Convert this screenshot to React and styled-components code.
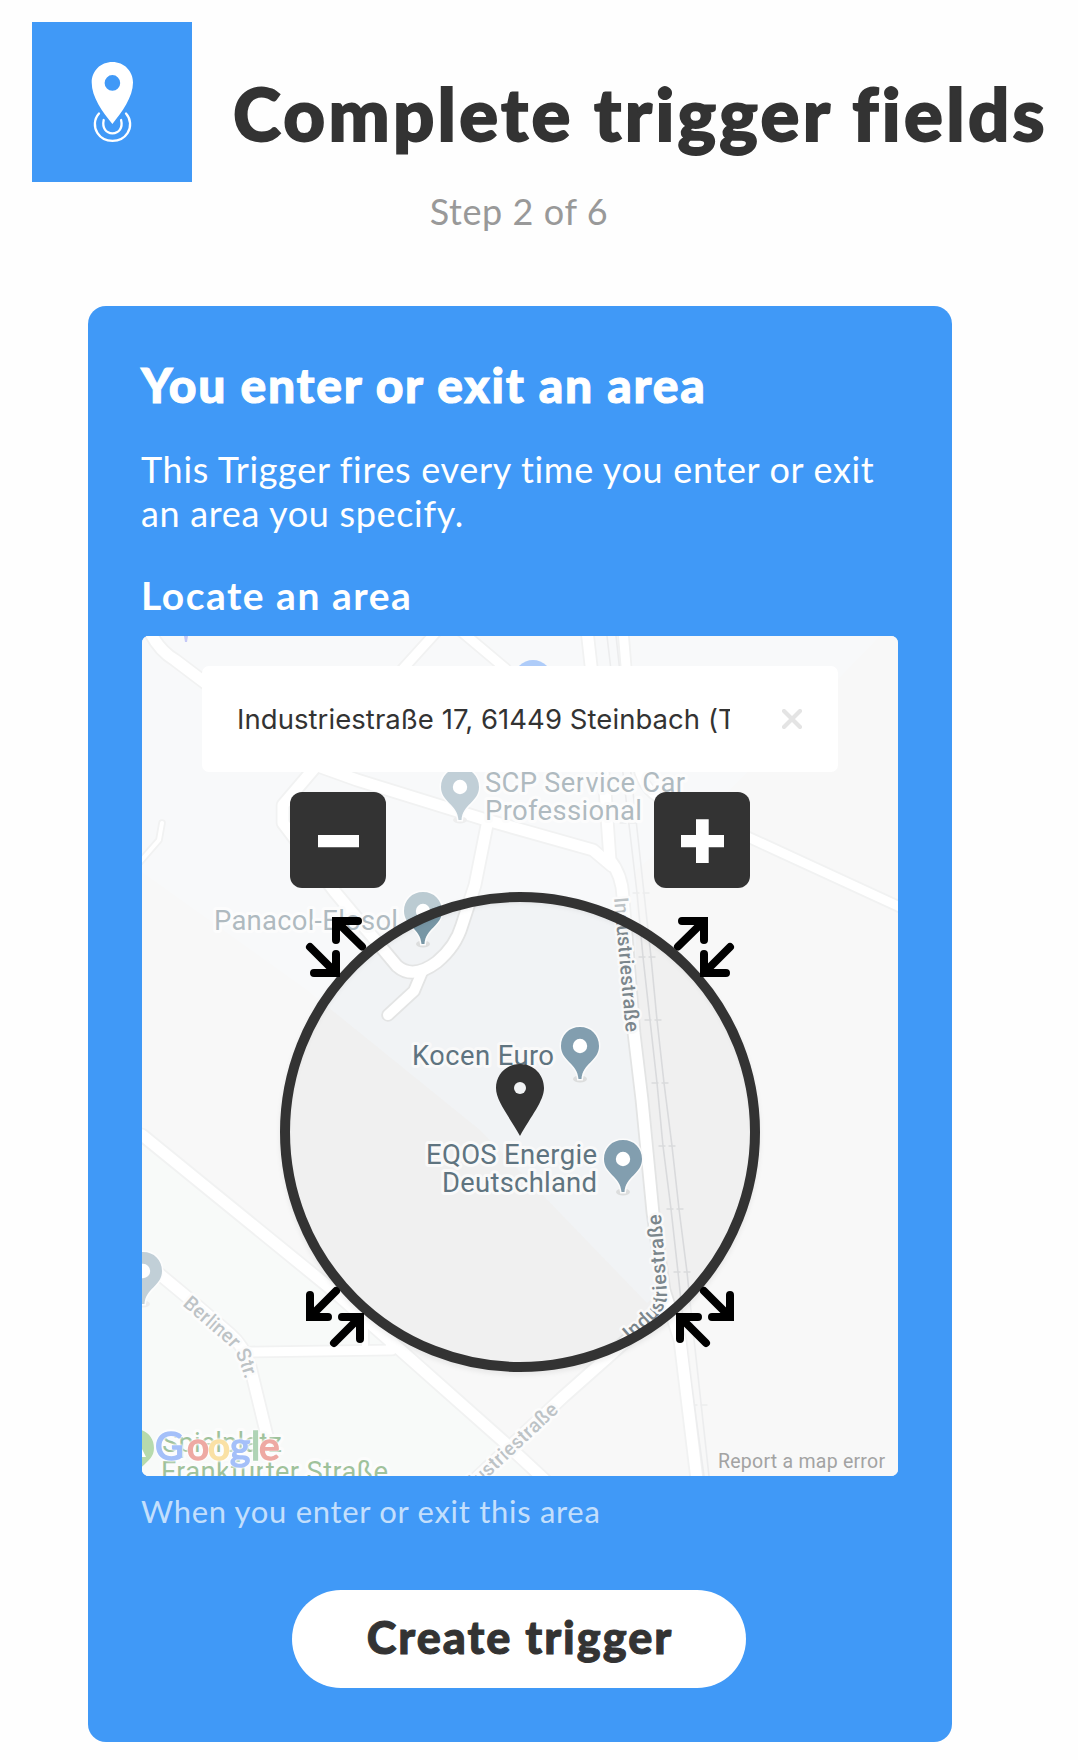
import React from "react";
import styled, { createGlobalStyle } from "styled-components";

const BLUE = "#4099f7";
const INK = "#333333";

const GlobalStyle = createGlobalStyle`
  * { box-sizing: border-box; }
  body { margin: 0; background: #fefefe; }
`;

const Page = styled.main`
  width: 1078px;
  height: 1760px;
  overflow: hidden;
  font-family: Lato, "Open Sans", sans-serif;
  color: ${INK};
`;

const Header = styled.header`
  display: flex;
  padding: 22px 0 0 32px;
`;

const ServiceTile = styled.div`
  flex: none;
  width: 160px;
  height: 160px;
  background: ${BLUE};
`;

const Title = styled.h1`
  margin: 46px 0 0 41px;
  font-size: 72.5px;
  line-height: 90px;
  font-weight: 900;
  letter-spacing: 3.3px;
  -webkit-text-stroke: 1.8px ${INK};
  white-space: nowrap;
`;

const Step = styled.p`
  margin: 7px 0 0;
  width: 1038px;
  text-align: center;
  font-size: 36px;
  line-height: 44px;
  letter-spacing: 0.6px;
  color: #999999;
`;

const Card = styled.section`
  width: 864px;
  height: 1436px;
  margin: 73px 0 0 88px;
  padding: 50px 54px 0 53px;
  border-radius: 18px;
  background: ${BLUE};
  color: #ffffff;
`;

const CardTitle = styled.h2`
  margin: 0;
  font-size: 48px;
  line-height: 58px;
  font-weight: 900;
  letter-spacing: 1.75px;
  -webkit-text-stroke: 1px #ffffff;
  white-space: nowrap;
`;

const Description = styled.p`
  margin: 33px 0 0;
  font-size: 36px;
  line-height: 44px;
  letter-spacing: 0.67px;
  white-space: nowrap;
`;

const FieldLabel = styled.h3`
  margin: 36px 0 0;
  font-size: 39px;
  line-height: 48px;
  font-weight: 700;
  letter-spacing: 1.5px;
`;

const Hint = styled.p`
  margin: 15px 0 0;
  font-size: 31px;
  line-height: 40px;
  letter-spacing: 0.7px;
  color: rgba(255, 255, 255, 0.7);
`;

const CreateButton = styled.button`
  display: block;
  width: 454px;
  height: 98px;
  margin: 59px 0 0 151px;
  padding: 0 0 5px 2px;
  border: 0;
  border-radius: 49px;
  background: #ffffff;
  color: ${INK};
  font: 900 45px/54px Lato, sans-serif;
  letter-spacing: 2px;
  -webkit-text-stroke: 1px ${INK};
`;

const MapFrame = styled.div`
  position: relative;
  width: 756px;
  height: 840px;
  margin: 17px 0 0 1px;
  border-radius: 7px;
  overflow: hidden;
  background: #f8f8f8;
`;

const MapDrawing = styled.svg`
  display: block;
`;

const MapControls = styled.div`
  position: absolute;
  inset: 30px 60px auto;
`;

const SearchBox = styled.div`
  display: flex;
  align-items: center;
  justify-content: space-between;
  height: 106px;
  padding: 0 36px 0 35px;
  border-radius: 7px;
  background: #ffffff;
`;

const SearchText = styled.span`
  width: 493px;
  overflow: hidden;
  white-space: nowrap;
  font: 400 27.5px/40px Inter, sans-serif;
  letter-spacing: 0.06px;
  color: ${INK};
`;

const ZoomRow = styled.div`
  display: flex;
  justify-content: space-between;
  padding: 20px 88px 0;
`;

const ZoomButton = styled.button`
  display: grid;
  width: 96px;
  height: 96px;
  padding: 0;
  border: 0;
  border-radius: 12px;
  background: ${INK};
`;

const RoadName = styled.text`
  font: 500 20px Roboto, sans-serif;
  fill: #7b868c;
  stroke: #f9f9f9;
  stroke-width: 5px;
  stroke-linejoin: round;
  paint-order: stroke;
`;

const PlaceName = styled.text`
  font: 400 27.5px Roboto, sans-serif;
  fill: ${(p) => (p.$park ? "#3f8436" : "#5f7480")};
  stroke: #f9f9f9;
  stroke-width: 6px;
  stroke-linejoin: round;
  paint-order: stroke;
`;

const Attribution = styled.text`
  font: 400 19.5px Roboto, sans-serif;
  fill: #a3a3a3;
`;

const LogoText = styled.text`
  font: 400 39px Lato, sans-serif;
  stroke-width: 1.6px;
  filter: drop-shadow(0 0 1.2px #fff) drop-shadow(0 0 1.2px #fff);
`;

function ServiceIcon() {
  return (
    <svg width="160" height="160" viewBox="32 22 160 160" fill="none">
      <g stroke="#fff" strokeWidth="2.3" strokeLinecap="round">
        <path d="M99 113.5C94 119 93.600 127 97.500 133.200C104 143.400 121 143.400 127.500 133.200C131.400 127 131 119 126 113.500" />
        <path d="M103.700 120C102 128 106 133.300 112.400 133.300C119 133.300 123 128 121.100 120" />
      </g>
      <path
        fill="#fff"
        fillRule="evenodd"
        d="M112.400 62C124 62 133 71 133 82.500C133 97 122 112 112.400 124C102.500 112 91.700 97 91.700 82.500C91.700 71 100.500 62 112.400 62ZM112.400 75.100a7.800 7.800 0 1 0 0 15.600a7.800 7.800 0 1 0 0 -15.600Z"
      />
    </svg>
  );
}

const ROADS = [
  { w: 11, d: "M142 1135L330 1288L397 1347L503 1441L545 1480" },
  { w: 11, d: "M140 1258L187 1297L230 1334Q244 1346 250 1366L268 1440" },
  { w: 9, d: "M250 1352L392 1350" },
  { w: 6, d: "M365 1324V1350M389 1338V1350" },
  { w: 11, d: "M660 1310L607 1358L563 1397L470 1484" },
  { w: 11, d: "M587 630L605 790L610 860Q622 875 623 897L634 1033L642 1100L653 1213L664 1290L680 1340L697 1480" },
  { w: 9, d: "M623 630L628 690L638 765Q644 795 670 802L750 838L900 907" },
  { w: 11, d: "M318 764L283 805L283 823L335 892L397 966Q413 980 437 962Q456 946 462 925L475 885L487 825" },
  { w: 10, d: "M422 972L414 991L388 1015" },
  { w: 11, d: "M318 766L357 780L483 819L593 850L612 866" },
  { w: 11, d: "M148 628Q158 650 175 660L212 688" },
  { w: 9, d: "M438 630L400 672" },
  { w: 9, d: "M462 632L506 669" },
  { w: 4, d: "M162 823L159 840L140 862" },
];

const RAILS = [
  "M607 636L637 893L643 957L650 1020L657 1083L663 1146L671 1209L678 1272L684 1330L704 1476",
  "M616 636L644 893L651 957L657 1020L664 1083L672 1146L679 1209L687 1272L693 1330L709 1476",
];

const RAIL_TICKS = [
  [628, 823], [641, 893], [647, 957], [653, 1020], [660, 1083],
  [667, 1146], [675, 1209], [682, 1272], [699, 1405],
];

function PlacePin({ x, y, color = "#829eaf" }) {
  return (
    <g transform={`translate(${x} ${y})`}>
      <ellipse cy="33" rx="7" ry="3.500" fill="#dcdddd" />
      <path
        d="M0 -19C11 -19 19 -11 19 0C19 15 2.500 17 1.500 33H-1.500C-2.500 17 -19 15 -19 0C-19 -11 -11 -19 0 -19Z"
        fill={color}
        stroke="#fbfbfb"
        strokeWidth="3"
        paintOrder="stroke"
      />
      <circle r="7.200" fill="#fff" />
    </g>
  );
}

function ResizeArrows() {
  const top =
    "M358 921H336V940M337 922L362 946.500M314 973H336V954M335 972L310 947";
  const bottom =
    "M310 1295V1317H328M311 1316L336 1291M342 1317H360V1339M359 1318L334 1343";
  return (
    <g fill="none" stroke="#000" strokeWidth="8" strokeLinecap="round">
      <path d={top} />
      <path d={bottom} />
      <g transform="translate(1040 0) scale(-1 1)">
        <path d={top} />
        <path d={bottom} />
      </g>
    </g>
  );
}

function AreaMap() {
  return (
    <MapDrawing width="756" height="840" viewBox="142 636 756 840">
      <defs>
        <path id="street-upper" d="M614 898L626.500 1040" />
        <path id="street-lower" d="M630 1341L654 1320Q668 1307 667 1292L660.500 1207" />
        <path id="street-bottom" d="M460 1504L567 1404" />
        <path id="street-berliner" d="M182 1305L225 1342Q237 1352 241 1366L250 1395" />
        <filter id="ring-shadow" x="-10%" y="-10%" width="120%" height="120%">
          <feGaussianBlur stdDeviation="2" />
        </filter>
      </defs>

      <rect x="142" y="636" width="756" height="840" fill="#f0f0f0" />
      <path
        fill="#f1f3f5"
        d="M142 636H880L720 800L636 870V1000L662 1290L647 1303L480 1130L307 990L142 872Z"
      />
      <path fill="#f1f5f3" d="M142 1135L397 1347L540 1476H142Z" />

      <g fill="none" strokeLinejoin="round" strokeLinecap="round">
        {ROADS.map((r) => (
          <path key={r.d} d={r.d} stroke="#e3e4e4" strokeWidth={r.w + 3.600} />
        ))}
        {RAILS.map((d) => (
          <path key={d} d={d} stroke="#d9dadc" strokeWidth="1.600" />
        ))}
        {RAIL_TICKS.map(([x, y]) => (
          <path
            key={y}
            d={`M${x - 8} ${y}h6M${x + 2} ${y}h6`}
            stroke="#d9dadc"
            strokeWidth="1.300"
          />
        ))}
        {ROADS.map((r) => (
          <path key={r.d} d={r.d} stroke="#ffffff" strokeWidth={r.w} />
        ))}
      </g>

      <RoadName><textPath href="#street-upper" textLength="135">Industriestraße</textPath></RoadName>
      <RoadName><textPath href="#street-lower" textLength="142">Industriestraße</textPath></RoadName>
      <RoadName><textPath href="#street-bottom" textLength="136">Industriestraße</textPath></RoadName>
      <RoadName><textPath href="#street-berliner" textLength="100">Berliner Str.</textPath></RoadName>

      <circle cx="533" cy="679" r="19" fill="#5d98f3" />
      <path d="M184 636h4l-1 6h-2z" fill="#8b93ee" />
      <PlacePin x={460} y={787} />
      <PlacePin x={423} y={911} color="#7796a5" />
      <PlacePin x={580} y={1046} />
      <PlacePin x={623} y={1159} />
      <PlacePin x={143} y={1271} />
      <path
        d="M135 1429C146 1429 154 1437 154 1448C154 1458 147 1461 139 1470H130V1429Z"
        fill="#6cb458"
      />
      <path d="M142 1449l4 8h-4z" fill="#fff" />

      <PlaceName x="485" y="792" textLength="200">SCP Service Car</PlaceName>
      <PlaceName x="485" y="820" textLength="157">Professional</PlaceName>
      <PlaceName x="214" y="930" textLength="184">Panacol-Elosol</PlaceName>
      <PlaceName x="412" y="1065" textLength="142">Kocen Euro</PlaceName>
      <PlaceName x="426" y="1164" textLength="171">EQOS Energie</PlaceName>
      <PlaceName x="442" y="1192" textLength="155">Deutschland</PlaceName>
      <PlaceName $park x="162" y="1452" textLength="120">Spielplatz</PlaceName>
      <PlaceName $park x="161" y="1481" textLength="227">Frankfurter Straße</PlaceName>

      <LogoText y="1460">
        <tspan x="155" fill="#4a80f2" stroke="#4a80f2">G</tspan>
        <tspan x="187" fill="#dc5347" stroke="#dc5347">o</tspan>
        <tspan x="208" fill="#f4c24b" stroke="#f4c24b">o</tspan>
        <tspan x="230" fill="#4a80f2" stroke="#4a80f2">g</tspan>
        <tspan x="251" fill="#5fa86c" stroke="#5fa86c">l</tspan>
        <tspan x="259" fill="#dc5347" stroke="#dc5347">e</tspan>
      </LogoText>

      <path
        fill="#fff"
        fillOpacity="0.500"
        fillRule="evenodd"
        d="M142 636H898V1476H142ZM520 892a240 240 0 1 0 0 480a240 240 0 1 0 0 -480Z"
      />
      <circle cx="520" cy="1135" r="236" fill="none" stroke="#000" strokeOpacity="0.060" strokeWidth="9" filter="url(#ring-shadow)" />
      <circle cx="520" cy="1132" r="235" fill="none" stroke={INK} strokeWidth="10" />
      <ResizeArrows />
      <path
        fill={INK}
        fillRule="evenodd"
        d="M520 1064C534 1064 544 1075 544 1088C544 1101 531 1116 520 1136C509 1116 496 1101 496 1088C496 1075 506 1064 520 1064Z"
      />
      <circle cx="520" cy="1088" r="6" fill="#f1f3f4" />

      <Attribution x="718" y="1468" textLength="167">Report a map error</Attribution>
    </MapDrawing>
  );
}

export default function App() {
  return (
    <Page>
      <GlobalStyle />
      <Header>
        <ServiceTile><ServiceIcon /></ServiceTile>
        <Title>Complete trigger fields</Title>
      </Header>
      <Step>Step 2 of 6</Step>
      <Card>
        <CardTitle>You enter or exit an area</CardTitle>
        <Description>
          This Trigger fires every time you enter or exit
          <br />
          an area you specify.
        </Description>
        <FieldLabel>Locate an area</FieldLabel>
        <MapFrame>
          <AreaMap />
          <MapControls>
            <SearchBox>
              <SearchText>Industriestraße 17, 61449 Steinbach (Taunus)</SearchText>
              <svg width="20" height="20" viewBox="0 0 20 20" stroke="#e4e4e4" strokeWidth="4.200" strokeLinecap="round">
                <path d="M2 2L18 18M18 2L2 18" />
              </svg>
            </SearchBox>
            <ZoomRow>
              <ZoomButton aria-label="Zoom out">
                <svg width="96" height="96" fill="#fff"><path d="M28 43h41v12.300H28z" /></svg>
              </ZoomButton>
              <ZoomButton aria-label="Zoom in">
                <svg width="96" height="96" fill="#fff"><path d="M27 43h15V27.300h12.700V43H70v12.300H54.700V71H42V55.300H27z" /></svg>
              </ZoomButton>
            </ZoomRow>
          </MapControls>
        </MapFrame>
        <Hint>When you enter or exit this area</Hint>
        <CreateButton>Create trigger</CreateButton>
      </Card>
    </Page>
  );
}
